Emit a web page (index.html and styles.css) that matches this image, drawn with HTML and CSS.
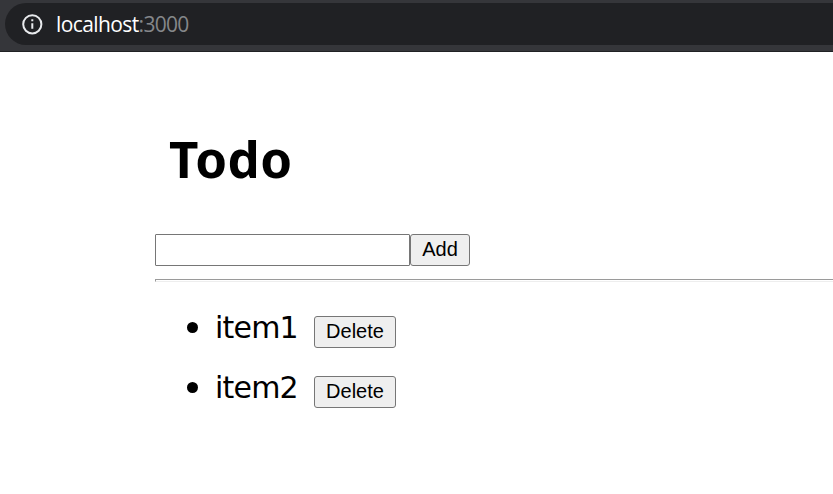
FILE: index.html
```
<!DOCTYPE html>
<html lang="en">
<head>
<meta charset="utf-8">
<title>Todo</title>
<link rel="stylesheet" href="styles.css">
</head>
<body>
<header class="browser-bar">
  <div class="address">
    <svg class="info" width="22" height="22" viewBox="0 0 22 22" aria-hidden="true">
      <circle cx="10.3" cy="11.3" r="9.1" fill="none" stroke="#e8eaed" stroke-width="2"/>
      <path d="M10.3 10.3v5.4M10.3 6.3v2" stroke="#e8eaed" stroke-width="2" fill="none"/>
    </svg>
    <span class="url"><span class="host">localhost</span><span class="port">:3000</span></span>
  </div>
</header>
<main class="app">
  <h1 class="title">Todo</h1>
  <form class="entry">
    <input class="field" type="text">
    <button class="btn add" type="button">Add</button>
  </form>
  <hr class="rule">
  <ul class="items">
    <li class="item"><span class="name">item1</span><button class="btn delete" type="button">Delete</button></li>
    <li class="item"><span class="name">item2</span><button class="btn delete" type="button">Delete</button></li>
  </ul>
</main>
</body>
</html>
```
FILE: styles.css
```
* { box-sizing: border-box; }
body {
  margin: 0;
  background: #fff;
  color: #000;
  font-family: "Noto Sans", sans-serif;
  overflow: hidden;
}
.browser-bar {
  height: 52px;
  padding: 3px 0 0 5px;
  background: #35363a;
  border-bottom: 1px solid #202124;
}
.address {
  display: flex;
  align-items: center;
  height: 42px;
  padding-left: 17px;
  background: #202124;
  border-radius: 21px 0 0 21px;
}
.url {
  display: flex;
  margin-left: 12px;
  font: 21px/28px "Open Sans", sans-serif;
}
.host { color: #fff; letter-spacing: -0.6px; }
.port { color: #85878a; letter-spacing: -0.7px; }
.app { padding: 71px 0 0 155px; }
.title {
  margin: 0 0 0 14px;
  font-size: 51px;
  line-height: 70px;
  font-weight: 700;
  letter-spacing: 0.4px;
}
.entry {
  display: flex;
  margin-top: 41px;
}
.field {
  width: 255px;
  height: 32px;
  padding: 0;
  border: 1px solid #767676;
  border-radius: 1px;
  background: #fff;
}
.btn {
  height: 32px;
  padding: 0 0 2px;
  border: 1px solid #767676;
  border-radius: 3px;
  background: #efefef;
  color: #000;
  font: 20px/28px "Liberation Sans", sans-serif;
}
.add { width: 60px; }
.rule {
  height: 3px;
  margin: 13px 0 0;
  border: 1px solid #9a9a9a;
  border-right: 0;
  border-bottom-color: #eee;
}
.items {
  margin: 16px 0 0;
  padding: 0;
  list-style: none;
}
.item {
  display: flex;
  height: 60px;
  padding-left: 32px;
}
.item::before {
  content: "";
  width: 11px;
  height: 11px;
  margin: 24px 17px 0 0;
  border-radius: 50%;
  background: #000;
}
.name {
  width: 99px;
  font-family: "DejaVu Sans", sans-serif;
  font-size: 30px;
  line-height: 60px;
  letter-spacing: -0.8px;
}
.delete {
  width: 82px;
  margin-top: 18px;
}
```
